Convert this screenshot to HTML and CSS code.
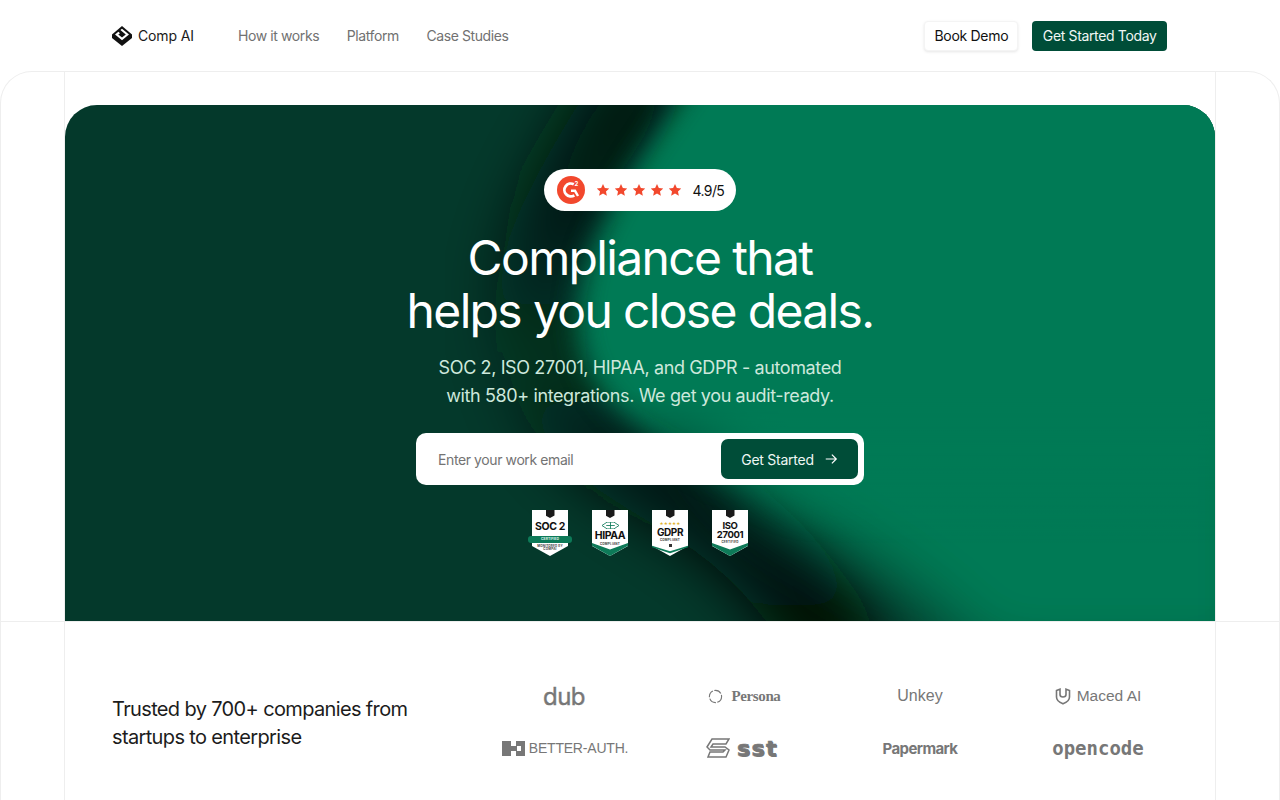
FILE: index.html
```html
<!DOCTYPE html>
<html>
<head>
  <meta charset="utf-8">
  <title>Comp AI</title>
  <link rel="stylesheet" href="styles.css">
</head>
<body>
  <header class="nav">
    <div class="nav-left">
      <a class="brand" href="#">
        <svg class="brand-mark" viewBox="0 0 20 20" width="20" height="20">
          <path d="M10 0 20 8.500V12L10 20 0 12V8.500Z" fill="#111"/>
          <path d="M10 2.800 17 8.600 10 14.200 3 8.600 6.400 5.800 8 7.200 6.300 8.600 10 11.600 13.800 8.600 8.400 4.100Z" fill="#fff"/>
        </svg>
        <span>Comp AI</span>
      </a>
      <nav class="nav-links">
        <a href="#">How it works</a>
        <a href="#">Platform</a>
        <a href="#">Case Studies</a>
      </nav>
    </div>
    <div class="nav-right">
      <a class="btn btn-light" href="#">Book Demo</a>
      <a class="btn btn-dark" href="#">Get Started Today</a>
    </div>
  </header>

  <div class="frame">
    <div class="frame-inner">
      <section class="hero">
        <svg class="hero-bg" viewBox="0 0 1150 516" preserveAspectRatio="none">
          <defs>
            <filter id="soft" x="-20%" y="-20%" width="140%" height="140%"><feGaussianBlur stdDeviation="13"/></filter>
            <filter id="wide" x="-20%" y="-20%" width="140%" height="140%"><feGaussianBlur stdDeviation="32"/></filter>
            <filter id="band" x="-30%" y="-30%" width="160%" height="160%"><feGaussianBlur stdDeviation="30"/></filter>
            <linearGradient id="fade" gradientUnits="userSpaceOnUse" x1="0" y1="0" x2="0" y2="516">
              <stop offset="0" stop-color="#01140e"/>
              <stop offset="0.2" stop-color="#01140e" stop-opacity="0.85"/>
              <stop offset="0.5" stop-color="#01140e" stop-opacity="0.25"/>
              <stop offset="0.7" stop-color="#01140e" stop-opacity="0.85"/>
              <stop offset="1" stop-color="#000a06"/>
            </linearGradient>
            <linearGradient id="fade-top" gradientUnits="userSpaceOnUse" x1="0" y1="0" x2="0" y2="516">
              <stop offset="0.55" stop-color="#fff"/>
              <stop offset="0.85" stop-color="#000"/>
            </linearGradient>
            <mask id="top-part" maskUnits="userSpaceOnUse" x="0" y="0" width="1150" height="516"><rect width="1150" height="516" fill="url(#fade-top)"/></mask>
          </defs>
          <rect width="1150" height="516" fill="#04392b"/>
          <path d="M590 -40 C530 60 465 150 475 230 C485 310 560 350 635 395 C690 430 730 470 785 560" fill="none" stroke="url(#fade)" stroke-width="90" filter="url(#band)"/>
          <path d="M780 -40 C720 60 640 150 630 230 C625 300 650 350 700 400 C780 445 860 490 920 560 L1200 560 L1200 -40Z" fill="#067a55" filter="url(#wide)"/>
          <g mask="url(#top-part)">
            <path d="M640 -40 C570 60 505 150 515 230 C525 310 610 350 700 400 C780 445 860 490 920 560 L1200 560 L1200 -40Z" fill="#067a55" filter="url(#soft)"/>
          </g>
        </svg>
        <div class="rating">
          <svg class="g2" viewBox="0 0 28 28" width="28" height="28">
            <circle cx="14" cy="14" r="14" fill="#f2482d"/>
            <path d="M16.800 8.300A6.400 6.400 0 1 0 17.300 19.300" fill="none" stroke="#fff" stroke-width="2.800"/>
            <path d="M14 14.800H18L21 20" fill="none" stroke="#fff" stroke-width="2.400"/>
            <text x="17.500" y="10" class="g2-sup">2</text>
          </svg>
          <div class="stars">
            <svg viewBox="0 0 24 24" width="14" height="14"><path d="M12 1.500l3.200 6.900 7.500.9-5.600 5.100 1.500 7.400L12 18.100l-6.600 3.700 1.500-7.400L1.300 9.300l7.500-.9z" fill="#f2482d"/></svg>
            <svg viewBox="0 0 24 24" width="14" height="14"><path d="M12 1.500l3.200 6.900 7.500.9-5.600 5.100 1.500 7.400L12 18.100l-6.600 3.700 1.500-7.400L1.300 9.300l7.500-.9z" fill="#f2482d"/></svg>
            <svg viewBox="0 0 24 24" width="14" height="14"><path d="M12 1.500l3.200 6.900 7.500.9-5.600 5.100 1.500 7.400L12 18.100l-6.600 3.700 1.500-7.400L1.300 9.300l7.500-.9z" fill="#f2482d"/></svg>
            <svg viewBox="0 0 24 24" width="14" height="14"><path d="M12 1.500l3.200 6.900 7.500.9-5.600 5.100 1.500 7.400L12 18.100l-6.600 3.700 1.500-7.400L1.300 9.300l7.500-.9z" fill="#f2482d"/></svg>
            <svg viewBox="0 0 24 24" width="14" height="14"><path d="M12 1.500l3.200 6.900 7.500.9-5.600 5.100 1.500 7.400L12 18.100l-6.600 3.700 1.500-7.400L1.300 9.300l7.500-.9z" fill="#f2482d"/></svg>
          </div>
          <span class="score">4.9/5</span>
        </div>
        <h1>Compliance that<br>helps you close deals.</h1>
        <p class="lead">SOC 2, ISO 27001, HIPAA, and GDPR - automated<br>with 580+ integrations. We get you audit-ready.</p>
        <form class="signup">
          <span class="placeholder">Enter your work email</span>
          <a class="signup-btn" href="#">Get Started
            <svg viewBox="0 0 16 16" width="14" height="14"><path d="M2 8H14M9 3l5 5-5 5" fill="none" stroke="#fff" stroke-width="1.400"/></svg>
          </a>
        </form>
        <div class="badges">
          <div class="badge">
            <div class="tab"></div>
            <b class="b-big">SOC 2</b>
            <div class="ribbon">CERTIFIED</div>
            <div class="tiny">MONITORED BY<br>COMPAI</div>
          </div>
          <div class="badge">
            <div class="tab"></div>
            <svg class="hipaa-mark" viewBox="0 0 20 8" width="17" height="7"><path d="M0 4 6 0H14L20 4 14 8H6Z" fill="none" stroke="#0d7a58" stroke-width="1"/><path d="M10 0V8M5 4H15" stroke="#0d7a58"/></svg>
            <b class="b-mid">HIPAA</b>
            <div class="tiny">COMPLIANT</div>
            <div class="chevron"></div>
          </div>
          <div class="badge">
            <div class="tab"></div>
            <div class="mini-stars">★★★★★</div>
            <b class="b-small">GDPR</b>
            <div class="tiny">COMPLIANT</div>
            <div class="lock"></div>
            <div class="chevron thin"></div>
          </div>
          <div class="badge">
            <div class="tab"></div>
            <b class="b-iso">ISO<br>27001</b>
            <div class="tiny">CERTIFIED</div>
            <div class="chevron"></div>
          </div>
        </div>
      </section>
    </div>
  </div>

  <section class="trusted">
    <div class="trusted-inner">
      <h2>Trusted by 700+ companies from<br>startups to enterprise</h2>
      <div class="logos">
        <div class="logo logo-dub">dub</div>
        <div class="logo logo-persona">
          <svg viewBox="0 0 16 16" width="15" height="15"><circle cx="8" cy="8" r="6.500" fill="none" stroke="#777" stroke-width="1.200" stroke-dasharray="8 1.500"/></svg>
          <span>Persona</span>
        </div>
        <div class="logo logo-unkey">Unkey</div>
        <div class="logo logo-maced">
          <svg viewBox="0 0 16 18" width="16" height="18"><path d="M1.500 3.500 5 2.200V7.500C5 9 6.200 10 8 10S11 9 11 7.500V2.200L14.500 3.500V10C14.500 13.500 11.500 15.500 8 16.800 4.500 15.500 1.500 13.500 1.500 10Z" fill="none" stroke="#777" stroke-width="1.600"/></svg>
          <span>Maced AI</span>
        </div>
        <div class="logo logo-better">
          <svg viewBox="0 0 23 15" width="23" height="15"><path d="M0 0H9V5H14V0H23V15H14V10H9V15H0Z" fill="#777"/><rect x="15" y="5" width="4" height="5" fill="#fff"/></svg>
          <span>BETTER-AUTH.</span>
        </div>
        <div class="logo logo-sst">
          <svg viewBox="0 0 24 20" width="24" height="20"><path d="M6 1H23L20 6H7L5 9H19L23 12 20 19H2L4 14H17L19 12H4L1 9Z" fill="none" stroke="#777" stroke-width="1.500"/></svg>
          <span>sst</span>
        </div>
        <div class="logo logo-paper">Papermark</div>
        <div class="logo logo-open">opencode</div>
      </div>
    </div>
  </section>
</body>
</html>
```

FILE: styles.css
```css
* {
  box-sizing: border-box;
}
html, body {
  margin: 0;
  height: 800px;
  overflow: hidden;
}
body {
  background: #fff;
  font-family: Inter, "Liberation Sans", sans-serif;
  color: #111;
}
a {
  color: inherit;
  text-decoration: none;
}

.nav {
  height: 71px;
  padding: 0 113px 0 112px;
  display: flex;
  align-items: center;
  justify-content: space-between;
  letter-spacing: -0.4px;
}
.nav-left, .nav-right, .brand, .nav-links {
  display: flex;
  align-items: center;
}
.brand {
  gap: 6px;
  font-size: 14px;
  width: 126px;
  color: #1a1a1a;
  letter-spacing: -0.15px;
}
.nav-links {
  gap: 27.500px;
  font-size: 14px;
  color: #717171;
}
.nav-right {
  gap: 14px;
}
.btn {
  height: 30px;
  display: flex;
  align-items: center;
  padding: 0 10.500px;
  font-size: 14px;
  border-radius: 4px;
  letter-spacing: -0.35px;
}
.btn-light {
  padding: 0 9px;
  letter-spacing: -0.3px;
  background: #fff;
  border: 1px solid #f4f4f4;
  box-shadow: 0 1px 3px rgba(0, 0, 0, 0.1);
}
.btn-dark {
  background: #004d38;
  color: #f2f7f5;
}

.frame {
  height: 550px;
  border: 1px solid #eeeeee;
  border-bottom: 0;
  border-radius: 32px 32px 0 0;
}
.frame-inner {
  height: 549px;
  margin: 0 63px;
  padding-top: 33px;
  border-left: 1px solid #eeeeee;
  border-right: 1px solid #eeeeee;
}
.hero {
  position: relative;
  height: 516px;
  overflow: hidden;
  border-radius: 32px 32px 0 0;
  display: flex;
  flex-direction: column;
  align-items: center;
  padding-top: 64px;
  color: #fff;
}
.hero-bg {
  position: absolute;
  top: 0;
  left: 0;
  width: 100%;
  height: 100%;
}
.rating, .hero h1, .lead, .signup, .badges {
  position: relative;
}

.rating {
  width: 192px;
  height: 42px;
  background: #fff;
  border-radius: 21px;
  display: flex;
  align-items: center;
  padding-left: 13px;
  color: #111;
}
.g2-sup {
  font-size: 6px;
  fill: #fff;
  font-weight: 700;
}
.stars {
  display: flex;
  gap: 4px;
  margin-left: 11px;
}
.score {
  font-size: 14px;
  margin-left: 10.500px;
  letter-spacing: -0.6px;
}

.hero h1 {
  margin: 20px 0 0;
  font-size: 48px;
  line-height: 53px;
  font-weight: 400;
  letter-spacing: -1.650px;
  text-align: center;
}
.lead {
  margin: 17px 0 0;
  font-size: 18px;
  line-height: 28px;
  text-align: center;
  color: #cde8dc;
  letter-spacing: -0.38px;
}
.signup {
  margin-top: 23px;
  width: 448px;
  height: 52px;
  background: #fff;
  border-radius: 10px;
  padding: 0 6px 0 22px;
  display: flex;
  align-items: center;
  justify-content: space-between;
}
.placeholder {
  font-size: 14px;
  color: #737373;
  letter-spacing: -0.4px;
}
.signup-btn {
  width: 137px;
  height: 40px;
  background: #004d38;
  border-radius: 7px;
  display: flex;
  align-items: center;
  justify-content: center;
  gap: 10px;
  font-size: 14px;
  color: #eef7f3;
  letter-spacing: -0.25px;
}

.badges {
  margin-top: 25px;
  display: flex;
  gap: 24px;
}
.badge {
  position: relative;
  z-index: 0;
  width: 36px;
  height: 46px;
  display: flex;
  flex-direction: column;
  align-items: center;
  color: #111;
  padding-top: 11px;
  text-align: center;
}
.badge::before {
  content: ' ';
  position: absolute;
  z-index: -1;
  top: 0;
  left: 0;
  width: 100%;
  height: 100%;
  background: #fff;
  clip-path: polygon(0 0, 100% 0, 100% 78%, 50% 100%, 0 78%);
}
.tab {
  position: absolute;
  top: 0;
  left: 13.500px;
  width: 9px;
  height: 8px;
  background: #1a1a1a;
  clip-path: polygon(0 0, 100% 0, 100% 70%, 50% 100%, 0 70%);
}
.badge b {
  display: block;
  font-weight: 700;
  letter-spacing: -0.4px;
}
.b-big {
  font-size: 10.500px;
  line-height: 11px;
}
.b-mid {
  font-size: 10.500px;
  line-height: 11px;
  margin-top: 1px;
}
.b-small {
  font-size: 10px;
  line-height: 10px;
  margin-top: 1px;
}
.b-iso {
  font-size: 9.500px;
  line-height: 9px;
}
.ribbon {
  flex: none;
  width: 44px;
  margin: 4px -4px 0;
  height: 7px;
  border-radius: 3px;
  background: #0d7a58;
  color: #d8f0e6;
  font-size: 3.500px;
  line-height: 7px;
  font-weight: 700;
}
.tiny {
  font-size: 3px;
  line-height: 3.500px;
  margin-top: 1.500px;
  color: #444;
  font-weight: 700;
  letter-spacing: 0.200px;
}
.hipaa-mark {
  flex: none;
  margin-top: 1px;
}
.mini-stars {
  font-size: 4px;
  line-height: 5px;
  color: #e0b12c;
}
.lock {
  width: 3px;
  height: 3px;
  margin-top: 2px;
  background: #333;
}
.chevron {
  position: absolute;
  left: 0;
  bottom: 0;
  width: 100%;
  height: 13px;
  background: #0d7a58;
  clip-path: polygon(0 0, 50% 50%, 100% 0, 100% 22%, 50% 100%, 0 22%);
}
.chevron.thin {
  height: 11px;
  bottom: 1px;
  clip-path: polygon(0 15%, 50% 65%, 100% 15%, 100% 30%, 50% 85%, 0 30%);
}

.trusted {
  border-top: 1px solid #eeeeee;
  padding: 0 63px;
  border-left: 1px solid #eeeeee;
  border-right: 1px solid #eeeeee;
  height: 180px;
}
.trusted-inner {
  height: 100%;
  border-left: 1px solid #eeeeee;
  border-right: 1px solid #eeeeee;
  padding: 0 47px;
  display: grid;
  grid-template-columns: 369px 1fr;
}
.trusted h2 {
  margin: 72.500px 0 0;
  font-size: 20px;
  line-height: 28px;
  font-weight: 400;
  color: #1c1c1c;
  letter-spacing: -0.64px;
}
.logos {
  display: grid;
  grid-template-columns: repeat(4, 178px);
  grid-auto-rows: 52px;
  margin: 49px 0 0 -6px;
  color: #777;
}
.logo {
  display: flex;
  align-items: center;
  justify-content: center;
  gap: 8px;
  color: #777;
  padding-bottom: 2px;
}
.logo-dub {
  font-size: 24px;
  font-weight: 400;
  letter-spacing: -0.5px;
  -webkit-text-stroke: 0.400px #777;
}
.logo-persona {
  font-family: "Liberation Serif", serif;
  font-size: 15px;
  font-weight: 700;
  gap: 9px;
  letter-spacing: -0.4px;
  padding-left: 4px;
}
.logo-unkey {
  font-size: 16px;
  font-family: "Liberation Sans", sans-serif;
}
.logo-maced {
  font-size: 15.500px;
  gap: 6px;
  font-family: "Liberation Sans", sans-serif;
}
.logo-better {
  font-size: 14px;
  gap: 4px;
  letter-spacing: -0.2px;
  font-family: "Liberation Sans", sans-serif;
  padding-left: 2px;
}
.logo-sst {
  font-family: "DejaVu Sans", sans-serif;
  font-size: 22px;
  font-weight: 700;
  gap: 7px;
  letter-spacing: 1.500px;
  text-shadow: 1px 1px 0 #777;
  -webkit-text-stroke: 0.600px #777;
}
.logo-paper {
  font-size: 15px;
  font-weight: 700;
  letter-spacing: -0.6px;
}
.logo-open {
  font-family: "DejaVu Sans Mono", monospace;
  font-size: 19px;
  font-weight: 700;
}
```
